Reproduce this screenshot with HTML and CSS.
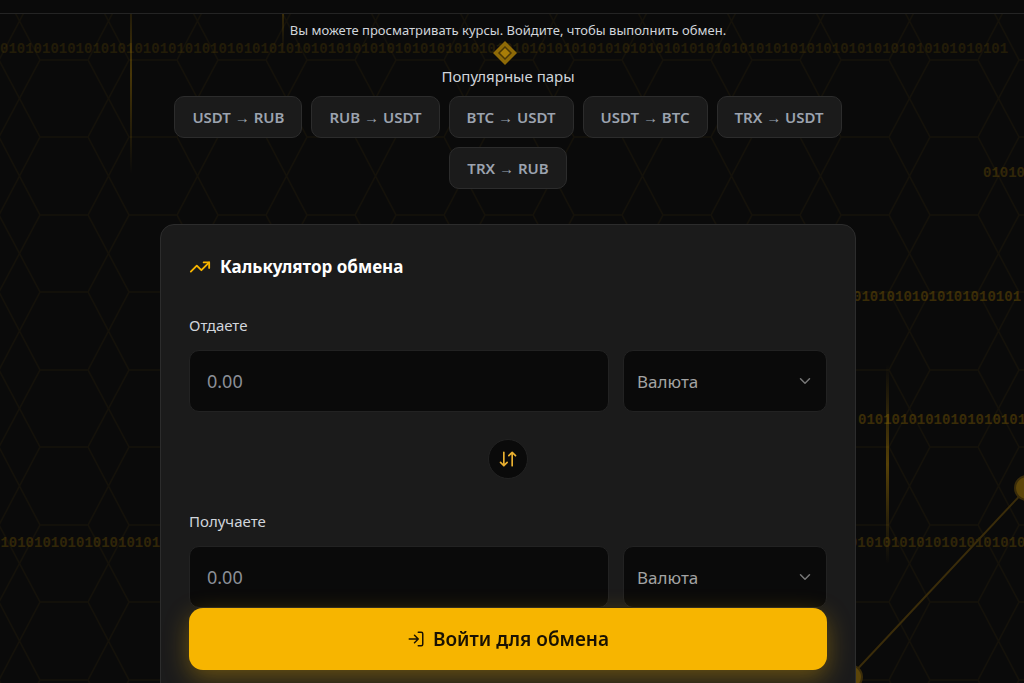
FILE: index.html
```
<!DOCTYPE html>
<html lang="ru">
<head>
  <meta charset="UTF-8" />
  <meta name="viewport" content="width=device-width, initial-scale=1.0" />
  <title>Калькулятор обмена</title>
  <link rel="stylesheet" href="styles.css">
</head>
<body>
  <header class="topbar"></header>

  <div class="stage">
    <!-- hexagons, binary rows and network lines behind the content -->
    <svg class="backdrop" aria-hidden="true">
      <defs>
        <pattern id="hex" x="-1" y="46" width="89" height="155" patternUnits="userSpaceOnUse">
          <path d="M41 0H89M41 77H89M41 155H89M0 0L41 77M41 0L0 77M0 77L41 155M41 77L0 155" fill="none" stroke="#f7b500" stroke-opacity="0.04" stroke-width="1.5" />
        </pattern>
        <linearGradient id="beam" x1="0" y1="0" x2="0" y2="1">
          <stop offset="0" stop-color="#f7b500" stop-opacity="0" />
          <stop offset="0.5" stop-color="#f7b500" />
          <stop offset="1" stop-color="#f7b500" stop-opacity="0" />
        </linearGradient>
      </defs>
      <rect width="100%" height="100%" fill="url(#hex)" />
      <rect x="130" y="-40" width="2" height="200" fill="url(#beam)" opacity="0.26" />
      <rect x="282" y="-80" width="2" height="120" fill="url(#beam)" opacity="0.26" />
      <rect x="886" y="350" width="3" height="200" fill="url(#beam)" opacity="0.32" />
      <g class="bits">
        <text x="0" y="39" opacity="0.1">010101010101010101010101010101010101010101010101010101010101010101010101010101010101010101010101010101010101010101010101</text>
        <text x="983" y="163" opacity="0.16">01010</text>
        <text x="853" y="287" opacity="0.2">01010101010101010101</text>
        <text x="858" y="410" opacity="0.2">01010101010101010101</text>
        <text x="-8" y="533" opacity="0.16">010101010101010101010101010101010101010101010101010101010101010101010101010101010101010101010101010101010101010101010101010</text>
      </g>
      <g class="network">
        <path d="M850 663L1027 474" />
        <circle cx="850" cy="663" r="12" />
        <circle cx="1027" cy="474" r="12" />
      </g>
      <g class="gem">
        <path d="M505 27L517 39L505 51L493 39Z" fill="#8e6a07" />
        <path d="M505 33L511 39L505 45L499 39Z" fill="#a87d08" stroke="#4a3706" stroke-width="1.5" />
      </g>
    </svg>

    <main class="content">
      <p class="notice">Вы можете просматривать курсы. Войдите, чтобы выполнить обмен.</p>

      <section class="pairs">
        <h2 class="pairs-title">Популярные пары</h2>
        <div class="pairs-list">
          <button type="button" class="pair">USDT → RUB</button>
          <button type="button" class="pair">RUB → USDT</button>
          <button type="button" class="pair">BTC → USDT</button>
          <button type="button" class="pair">USDT → BTC</button>
          <button type="button" class="pair">TRX → USDT</button>
          <button type="button" class="pair">TRX → RUB</button>
        </div>
      </section>

      <form class="card">
        <h1 class="card-title">
          <svg class="icon title-icon" viewBox="0 0 24 24" aria-hidden="true">
            <path d="M22 7L13.5 15.5L8.5 10.5L2 17" />
            <path d="M16 7H22V13" />
          </svg>
          Калькулятор обмена
        </h1>

        <div class="field">
          <label for="give">Отдаете</label>
          <div class="field-row">
            <input type="text" id="give" class="amount" inputmode="decimal" placeholder="0.00" />
            <div class="select-wrap">
              <select class="currency" aria-label="Валюта, которую отдаете">
                <option value="">Валюта</option>
                <option>USDT</option>
                <option>RUB</option>
                <option>BTC</option>
                <option>TRX</option>
              </select>
              <svg class="icon chevron" viewBox="0 0 24 24" aria-hidden="true"><path d="M6 9L12 15L18 9" /></svg>
            </div>
          </div>
        </div>

        <button type="button" class="swap" aria-label="Поменять местами">
          <svg class="icon swap-icon" viewBox="0 0 24 24" aria-hidden="true">
            <path d="M3 16L7 20L11 16M7 20V4" />
            <path d="M21 8L17 4L13 8M17 4V20" />
          </svg>
        </button>

        <div class="field">
          <label for="get">Получаете</label>
          <div class="field-row">
            <input type="text" id="get" class="amount" inputmode="decimal" placeholder="0.00" />
            <div class="select-wrap">
              <select class="currency" aria-label="Валюта, которую получаете">
                <option value="">Валюта</option>
                <option>USDT</option>
                <option>RUB</option>
                <option>BTC</option>
                <option>TRX</option>
              </select>
              <svg class="icon chevron" viewBox="0 0 24 24" aria-hidden="true"><path d="M6 9L12 15L18 9" /></svg>
            </div>
          </div>
        </div>

        <button type="submit" class="submit">
          <svg class="icon login-icon" viewBox="0 0 24 24" aria-hidden="true">
            <path d="M15 3H19A2 2 0 0 1 21 5V19A2 2 0 0 1 19 21H15" />
            <path d="M10 17L15 12L10 7M15 12H3" />
          </svg>
          Войти для обмена
        </button>
      </form>
    </main>
  </div>
</body>
</html>
```
FILE: styles.css
```
* {
  box-sizing: border-box;
}
body {
  margin: 0;
  height: 100vh;
  display: flex;
  flex-direction: column;
  background: #0a0a0a;
  color: #d1d5db;
  font-family: "Noto Sans", "Open Sans", sans-serif;
}
h1, h2, p {
  margin: 0;
}
button, input, select {
  font-family: inherit;
}
.topbar {
  flex: none;
  height: 14px;
  border-bottom: 1px solid #242424;
}
.stage {
  flex: 1;
  min-height: 0;
  position: relative;
}
.backdrop {
  position: absolute;
  inset: 0;
  width: 100%;
  height: 100%;
}
.bits {
  fill: #f7b500;
  font-family: "Liberation Mono", monospace;
  font-size: 14px;
  font-weight: 700;
}
.network {
  fill: #5c4509;
  stroke: #3a2c0a;
  stroke-width: 2;
}
.content {
  position: relative;
  height: 100%;
  padding: 8px 16px 0 8px;
  overflow-y: auto;
  scrollbar-width: none;
}
.notice {
  font-size: 13px;
  line-height: 16px;
  text-align: center;
}
.pairs {
  max-width: 696px;
  margin: 27px auto 0;
}
.pairs-title {
  font-size: 15px;
  font-weight: 400;
  line-height: 22px;
  text-align: center;
}
.pairs-list {
  display: flex;
  flex-wrap: wrap;
  justify-content: center;
  gap: 9px;
  margin-top: 9px;
}
.pair {
  height: 42px;
  padding: 0 17px;
  border: 1px solid #2c2c2c;
  border-radius: 10px;
  background: #1b1b1b;
  color: #9ca3af;
  font-size: 15px;
  font-weight: 600;
  cursor: pointer;
}
.card {
  max-width: 696px;
  margin: 35px auto 40px;
  padding: 28px 28px 56px;
  border: 1px solid #2c2c2c;
  border-radius: 14px;
  background: #1b1b1b;
}
.card-title {
  display: flex;
  align-items: center;
  gap: 9px;
  margin-bottom: 32px;
  color: #fff;
  font-size: 17px;
  font-weight: 700;
  line-height: 28px;
}
.icon {
  fill: none;
  stroke: currentColor;
  stroke-width: 2;
  stroke-linecap: round;
  stroke-linejoin: round;
}
.title-icon {
  width: 22px;
  height: 22px;
  color: #f7b500;
}
.field label {
  display: block;
  margin-bottom: 13px;
  font-size: 15px;
  line-height: 24px;
}
.field-row {
  display: grid;
  grid-template-columns: 1fr 204px;
  gap: 14px;
}
.amount, .currency {
  width: 100%;
  height: 62px;
  border: 1px solid #222;
  border-radius: 10px;
  background: #0a0a0a;
  color: #9ca3af;
  font-size: 18px;
}
.amount {
  padding: 0 17px;
}
.amount::placeholder {
  color: #8b8f97;
}
.select-wrap {
  position: relative;
}
.currency {
  padding: 0 13px;
  appearance: none;
  color: #a3a3a3;
  font-size: 17px;
}
.chevron {
  position: absolute;
  right: 13px;
  top: 22px;
  width: 18px;
  height: 18px;
  color: #777;
  pointer-events: none;
}
.swap {
  display: flex;
  align-items: center;
  justify-content: center;
  width: 40px;
  height: 40px;
  margin: 27px auto 30px;
  padding: 0;
  border: 1px solid #222;
  border-radius: 50%;
  background: #0a0a0a;
  color: #e9b030;
  cursor: pointer;
}
.swap-icon {
  width: 20px;
  height: 20px;
}
.submit {
  position: sticky;
  bottom: 13px;
  display: flex;
  align-items: center;
  justify-content: center;
  gap: 8px;
  width: 100%;
  height: 62px;
  margin-top: 28px;
  border: 0;
  border-radius: 14px;
  background: #f7b500;
  box-shadow: 0 8px 24px rgba(247, 181, 0, 0.35);
  color: #1a1203;
  font-size: 19px;
  font-weight: 600;
  cursor: pointer;
}
.login-icon {
  width: 18px;
  height: 18px;
}
```
